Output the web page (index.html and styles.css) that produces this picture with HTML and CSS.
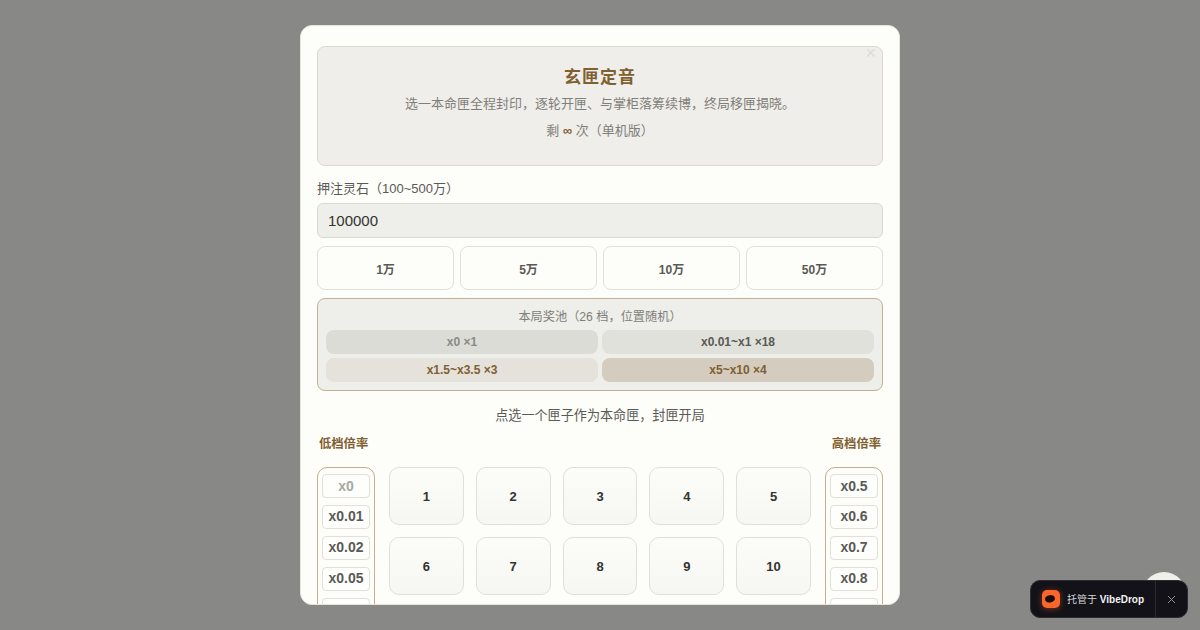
FILE: index.html
```html
<!DOCTYPE html>
<html lang="zh-CN">
<head>
  <meta charset="UTF-8">
  <meta name="viewport" content="width=device-width, initial-scale=1.0">
  <title>玄匣定音</title>
  <link rel="stylesheet" href="styles.css">
</head>
<body>
  <div class="fab"></div>

  <div class="overlay">
    <div class="modal">
      <button class="modal-close">×</button>

      <div class="hero">
        <h2>玄匣定音</h2>
        <p>选一本命匣全程封印，逐轮开匣、与掌柜落筹续博，终局移匣揭晓。</p>
        <p>剩 <span class="infinite">∞</span> 次（单机版）</p>
      </div>

      <label class="field-label" for="stake">押注灵石（100~500万）</label>
      <input class="stake-input" id="stake" type="text" value="100000">

      <div class="quick-stakes">
        <button class="stake-btn">1万</button>
        <button class="stake-btn">5万</button>
        <button class="stake-btn">10万</button>
        <button class="stake-btn">50万</button>
      </div>

      <div class="pool">
        <div class="pool-title">本局奖池（26 档，位置随机）</div>
        <div class="pool-grid">
          <div class="pool-chip tier-zero">x0 ×1</div>
          <div class="pool-chip tier-low">x0.01~x1 ×18</div>
          <div class="pool-chip tier-mid">x1.5~x3.5 ×3</div>
          <div class="pool-chip tier-high">x5~x10 ×4</div>
        </div>
      </div>

      <div class="hint">点选一个匣子作为本命匣，封匣开局</div>

      <div class="side-labels">
        <span>低档倍率</span>
        <span>高档倍率</span>
      </div>

      <div class="board">
        <div class="rate-col">
          <div class="rate rate-out">x0</div>
          <div class="rate">x0.01</div>
          <div class="rate">x0.02</div>
          <div class="rate">x0.05</div>
          <div class="rate"></div>
        </div>
        <div class="boxes">
          <button class="box">1</button>
          <button class="box">2</button>
          <button class="box">3</button>
          <button class="box">4</button>
          <button class="box">5</button>
          <button class="box">6</button>
          <button class="box">7</button>
          <button class="box">8</button>
          <button class="box">9</button>
          <button class="box">10</button>
        </div>
        <div class="rate-col">
          <div class="rate rate-first">x0.5</div>
          <div class="rate">x0.6</div>
          <div class="rate">x0.7</div>
          <div class="rate">x0.8</div>
          <div class="rate"></div>
        </div>
      </div>
    </div>
  </div>

  <div class="badge">
    <div class="badge-main">
      <svg class="badge-logo" width="18" height="18" viewBox="0 0 18 18">
        <rect width="18" height="18" rx="5" fill="#f9652a"/>
        <ellipse cx="8" cy="8.800" rx="5" ry="3.700" transform="rotate(-10 8 8.800)" fill="#1b0e0a"/>
      </svg>
      <span class="badge-text">托管于 <b>VibeDrop</b></span>
    </div>
    <div class="badge-close">
      <svg width="9" height="9" viewBox="0 0 9 9">
        <path d="M1 1l7 7M8 1L1 8" stroke="#8f8f94" stroke-width="1" fill="none"/>
      </svg>
    </div>
  </div>
</body>
</html>
```

FILE: styles.css
```css
:root {
  --gold-color: #7f6030;
  --text-color: #5a5a55;
  --muted-color: #7f7f79;
  --line-color: #e2dfd7;
  --paper-color: #fdfdf9;
  --font-family: "Liberation Sans", "Noto Sans CJK SC", sans-serif;
}

* {
  box-sizing: border-box;
  margin: 0;
  padding: 0;
}

body {
  width: 1200px;
  height: 630px;
  overflow: hidden;
  font-family: var(--font-family);
  background-color: #f5f5f0;
}

button {
  font-family: var(--font-family);
}

.overlay {
  position: fixed;
  inset: 0;
  display: flex;
  align-items: center;
  justify-content: center;
  background-color: #888886;
}

.modal {
  position: relative;
  width: 600px;
  height: 580px;
  padding: 20px 16px 0;
  overflow: hidden;
  border: 1px solid #e6e4dc;
  border-radius: 12px;
  background-color: var(--paper-color);
}

.modal-close {
  position: absolute;
  top: 17px;
  right: 23px;
  border: none;
  background: none;
  font-size: 18px;
  line-height: 20px;
  color: #dddcd7;
}

.hero {
  height: 120px;
  padding-top: 19px;
  margin-bottom: 13px;
  text-align: center;
  border: 1px solid #ddd8cc;
  border-radius: 8px;
  background-color: #efeeea;
}

.hero h2 {
  font-size: 17px;
  line-height: 24px;
  letter-spacing: 1px;
  color: var(--gold-color);
}

.hero p {
  font-size: 13px;
  line-height: 27px;
  color: var(--muted-color);
}

.infinite {
  font-weight: bold;
  color: var(--gold-color);
}

.field-label {
  display: block;
  font-size: 13px;
  line-height: 20px;
  margin-bottom: 4px;
  color: var(--text-color);
}

.stake-input {
  display: block;
  width: 100%;
  height: 35px;
  padding: 0 10px;
  margin-bottom: 8px;
  font-family: var(--font-family);
  font-size: 15px;
  color: #333330;
  border: 1px solid #d9d8d1;
  border-radius: 6px;
  background-color: #eeeeea;
}

.quick-stakes {
  display: grid;
  grid-template-columns: repeat(4, 1fr);
  gap: 6px;
  margin-bottom: 8px;
}

.stake-btn {
  height: 44px;
  font-size: 12px;
  font-weight: bold;
  color: var(--text-color);
  border: 1px solid var(--line-color);
  border-radius: 8px;
  background-color: var(--paper-color);
}

.pool {
  height: 93px;
  padding: 9px 8px 8px;
  margin-bottom: 15px;
  border: 1px solid #c4b08f;
  border-radius: 8px;
  background-color: #eeeeea;
}

.pool-title {
  font-size: 12.2px;
  line-height: 18px;
  margin-bottom: 4px;
  text-align: center;
  color: var(--muted-color);
}

.pool-grid {
  display: grid;
  grid-template-columns: 1fr 1fr;
  gap: 4px;
}

.pool-chip {
  height: 24px;
  font-size: 12px;
  font-weight: bold;
  line-height: 24px;
  text-align: center;
  border-radius: 8px;
}

.tier-zero {
  color: #8a8a85;
  background-color: #dcdcd7;
}

.tier-low {
  color: var(--text-color);
  background-color: #e1e1dc;
}

.tier-mid {
  color: var(--gold-color);
  background-color: #e5e2dc;
}

.tier-high {
  color: var(--gold-color);
  background-color: #d4ccbe;
}

.hint {
  font-size: 13.1px;
  line-height: 20px;
  margin-bottom: 8px;
  text-align: center;
  color: var(--text-color);
}

.side-labels {
  display: flex;
  justify-content: space-between;
  padding: 0 2px;
  margin-bottom: 13px;
  font-size: 12.3px;
  font-weight: bold;
  line-height: 20px;
  color: var(--gold-color);
}

.board {
  display: flex;
  gap: 14px;
  align-items: flex-start;
}

.rate-col {
  display: flex;
  flex-direction: column;
  flex: none;
  gap: 7px;
  width: 58px;
  height: 200px;
  padding: 6px 4px;
  border: 1px solid #c4b08f;
  border-radius: 10px;
}

.rate {
  flex: none;
  height: 23.9px;
  font-size: 14px;
  font-weight: bold;
  line-height: 21.4px;
  text-align: center;
  color: var(--text-color);
  border: 1px solid var(--line-color);
  border-radius: 4px;
  background-color: #fefefc;
}

.rate-out {
  line-height: 22px;
  color: #a8a8a2;
}

.rate-first {
  line-height: 22px;
}

.boxes {
  display: grid;
  flex: 1;
  grid-template-columns: repeat(5, 1fr);
  gap: 12px;
}

.box {
  height: 58px;
  font-size: 13px;
  font-weight: bold;
  color: #333330;
  border: 1px solid var(--line-color);
  border-radius: 10px;
  background: linear-gradient(#fcfcf9, #f6f6f3);
}

.fab {
  position: fixed;
  left: 1142px;
  top: 572px;
  width: 44px;
  height: 44px;
  border-radius: 50%;
  background-color: #f0f0ea;
  z-index: 2;
}

.badge {
  position: fixed;
  left: 1030px;
  top: 580px;
  display: flex;
  width: 158px;
  height: 38px;
  z-index: 3;
  border: 1px solid #2c2c32;
  border-radius: 10px;
  background-color: #121218;
}

.badge-main {
  display: flex;
  align-items: center;
  gap: 7px;
  width: 125px;
  padding-left: 11px;
  border-right: 1px solid #2c2c32;
}

.badge-logo {
  flex: none;
  filter: drop-shadow(0 1px 3px rgba(249, 101, 42, 0.45));
}

.badge-text {
  padding-bottom: 2px;
  font-size: 10px;
  white-space: nowrap;
  color: #d8d8da;
}

.badge-text b {
  color: #f4f4f5;
}

.badge-close {
  display: flex;
  flex: 1;
  align-items: center;
  justify-content: center;
}
```
